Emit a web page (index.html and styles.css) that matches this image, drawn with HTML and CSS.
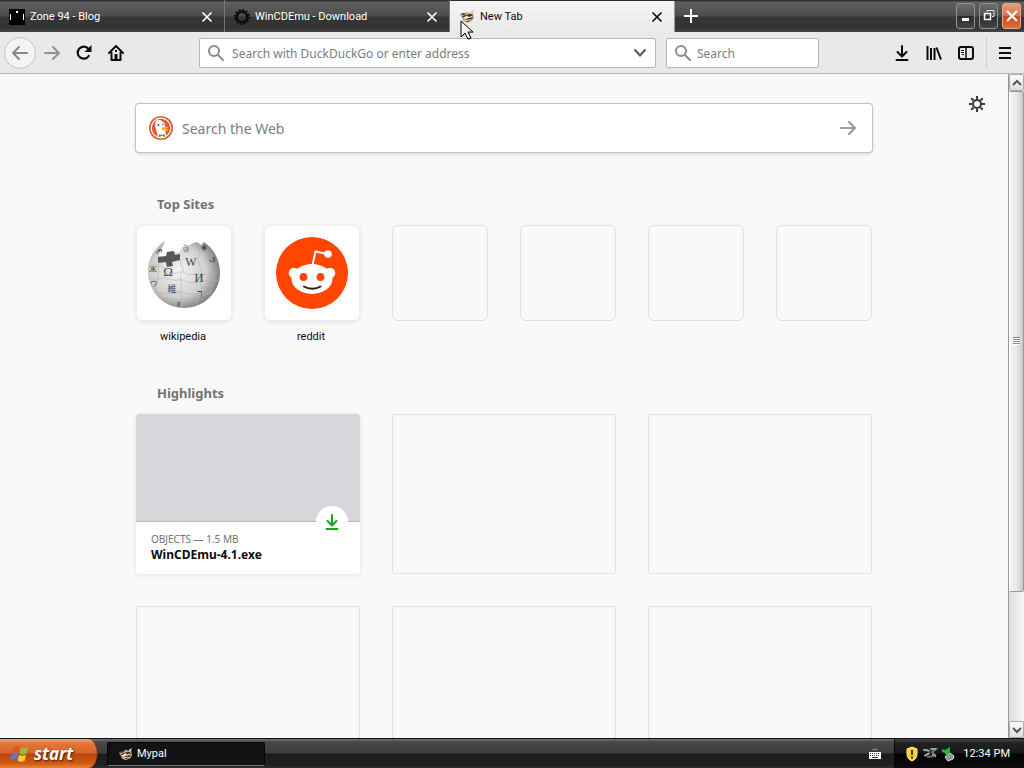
FILE: index.html
```html
<!DOCTYPE html>
<html lang="en">
<head>
<meta charset="utf-8">
<meta name="viewport" content="width=device-width, initial-scale=1">
<title>New Tab</title>
<link rel="stylesheet" href="styles.css">
</head>
<body>
<svg class="defs" width="0" height="0" aria-hidden="true">
  <defs>
    <symbol id="close" viewBox="0 0 12 12"><path d="M2 2l8 8M10 2l-8 8" fill="none" stroke="currentColor" stroke-width="1.700" stroke-linecap="round"/></symbol>
    <symbol id="glass" viewBox="0 0 16 16"><g fill="none" stroke="currentColor" stroke-width="2" stroke-linecap="round"><circle cx="6" cy="6" r="5"/><path d="M10 10l5 5"/></g></symbol>
    <symbol id="download" viewBox="0 0 16 16"><path d="M8 1v10M3.500 7l4.500 4.500L12.500 7M2.500 15h11" fill="none" stroke="currentColor" stroke-width="2" stroke-linecap="round" stroke-linejoin="round"/></symbol>
    <symbol id="arrow" viewBox="0 0 16 16"><path d="M1 8h14M9 2l6 6-6 6" fill="none" stroke="currentColor" stroke-width="2" stroke-linecap="round" stroke-linejoin="round"/></symbol>
    <symbol id="mypal" viewBox="0 0 16 16">
      <path d="M1 6l4-1 3-2 3 1 2-2 2-1-1 3 1 5-2 3-5 2-4-2-1-3z" fill="#c1ad86"/>
      <path d="M1 5l4-1 2 1-3 1zM3 8l3-2 2 1-3 2zM7 6l5-1 2 2-4 1zM6 10l8-2-1 2-5 1zM7 12l4-1-2 2z" fill="#3a2c1d"/>
      <path d="M4 9l3-2 3 1-3 2zM10 8l3-1 0 1-3 1zM7 11l4-1-1 1-3 1zM12 3l2-1-1 3z" fill="#f4edda"/>
    </symbol>
    <radialGradient id="globeShade" cx=".42" cy=".45" r=".6"><stop offset="0" stop-color="#f4f4f4"/><stop offset=".65" stop-color="#cfcfcf"/><stop offset="1" stop-color="#777"/></radialGradient>
  </defs>
</svg>

<header class="tabstrip">
  <div class="tabs">
    <div class="tab">
      <svg class="favicon" viewBox="0 0 16 16"><path fill="#000" d="M0 0h16v16H0z"/><path fill="#fff" d="M1 5h1v6H1zM14 5h1v6h-1zM7 2h2v2H7z"/></svg>
      <span class="tab-title">Zone 94 - Blog</span>
      <button class="tab-close" aria-label="Close Zone 94 - Blog"><svg width="12" height="12"><use href="#close"/></svg></button>
    </div>
    <div class="tab">
      <svg class="favicon" viewBox="0 0 16 16"><circle cx="8" cy="8" r="5.200" fill="none" stroke="#0a0a0a" stroke-width="2.600"/><circle cx="8" cy="8" r="7.200" fill="none" stroke="#0a0a0a" stroke-width="1.600" stroke-dasharray="2.200 1.570"/></svg>
      <span class="tab-title">WinCDEmu - Download</span>
      <button class="tab-close" aria-label="Close WinCDEmu - Download"><svg width="12" height="12"><use href="#close"/></svg></button>
    </div>
    <div class="tab tab-active">
      <svg class="favicon"><use href="#mypal"/></svg>
      <span class="tab-title">New Tab</span>
      <button class="tab-close" aria-label="Close New Tab"><svg width="12" height="12"><use href="#close"/></svg></button>
    </div>
    <button class="tab-add" aria-label="Open a new tab"><svg width="16" height="16" viewBox="0 0 16 16"><path d="M8 1v14M1 8h14" stroke="#fff" stroke-width="2"/></svg></button>
  </div>
  <div class="window-buttons">
    <button class="window-button" aria-label="Minimize"><svg width="16" height="16" viewBox="0 0 16 16"><path fill="#fff" d="M4 10h7v3H4z"/></svg></button>
    <button class="window-button" aria-label="Restore"><svg width="16" height="16" viewBox="0 0 16 16"><path d="M6 4V2.500h7v6h-2" fill="none" stroke="#e4e4e4"/><path d="M3.500 5.500h6v6h-6z" fill="none" stroke="#fff" stroke-width="1.500"/></svg></button>
    <button class="window-button window-close" aria-label="Close"><svg width="16" height="16" viewBox="0 0 16 16"><path d="M3 3l10 10M13 3L3 13" stroke="#fff" stroke-width="2.200"/></svg></button>
  </div>
  <svg class="pointer" width="16" height="22" viewBox="0 0 16 22"><path d="M1 1v16l4-4 3 6 3-1-3-6h5z" transform="translate(1 1)" fill="#000" fill-opacity=".2"/><path d="M1 1v16l4-4 3 6 3-1-3-6h5z" fill="#f4f4f4" stroke="#000" stroke-width="1"/></svg>
</header>

<nav class="toolbar" aria-label="Navigation">
  <button class="tool back" aria-label="Back"><svg class="flip" width="16" height="16"><use href="#arrow"/></svg></button>
  <button class="tool dim" aria-label="Forward"><svg width="16" height="16"><use href="#arrow"/></svg></button>
  <button class="tool" aria-label="Reload"><svg width="16" height="16" viewBox="0 0 16 16"><path d="M12.700 11A6 6 0 1 1 12 3.500l1.500 1.500" fill="none" stroke="currentColor" stroke-width="2.200" stroke-linecap="round"/><path d="M15.500 0v7h-7z" fill="currentColor"/></svg></button>
  <button class="tool" aria-label="Home"><svg width="16" height="16" viewBox="0 0 16 16"><path d="M1 8l7-7 7 7" fill="none" stroke="currentColor" stroke-width="2" stroke-linecap="round" stroke-linejoin="round"/><path d="M3.500 7v8h9V7" fill="none" stroke="currentColor" stroke-width="2" stroke-linejoin="round"/><path d="M6.500 9h3v6h-3zM7 5h2v2H7z" fill="currentColor"/></svg></button>
  <span class="spacer"></span>
  <label class="field address">
    <svg width="16" height="16"><use href="#glass"/></svg>
    <input type="text" aria-label="Address" placeholder="Search with DuckDuckGo or enter address">
    <svg class="chevron" width="14" height="14" viewBox="0 0 14 14"><path d="M2 4l5 5.500L12 4" fill="none" stroke="#555" stroke-width="2" stroke-linecap="round"/></svg>
  </label>
  <label class="field search">
    <svg width="16" height="16"><use href="#glass"/></svg>
    <input type="text" aria-label="Search" placeholder="Search">
  </label>
  <span class="spacer"></span>
  <button class="tool" aria-label="Downloads"><svg width="16" height="16"><use href="#download"/></svg></button>
  <button class="tool" aria-label="Library"><svg width="16" height="16" viewBox="0 0 16 16"><path d="M1.500 1v14M5 3v12M8.500 3v12M10.500 2.500l4.500 12" fill="none" stroke="currentColor" stroke-width="2"/></svg></button>
  <button class="tool" aria-label="Sidebars"><svg width="16" height="16" viewBox="0 0 16 16"><rect x="1" y="2" width="14" height="12" rx="2" fill="none" stroke="currentColor" stroke-width="2"/><path d="M8 2v12" stroke="currentColor" stroke-width="1.500"/><path d="M3 5.500h3M3 7.500h3M4 9.500h2" stroke="currentColor"/></svg></button>
  <span class="divider"></span>
  <button class="tool" aria-label="Open menu"><svg width="14" height="14" viewBox="0 0 14 14"><path d="M1 2h12M1 7h12M1 12h12" stroke="currentColor" stroke-width="2"/></svg></button>
</nav>

<div class="viewport">
  <main class="page">
    <button class="settings" aria-label="Page settings"><svg width="16" height="16" viewBox="0 0 16 16"><circle cx="8" cy="8" r="4" fill="none" stroke="currentColor" stroke-width="2"/><path d="M8 0v3M8 13v3M0 8h3M13 8h3M2.300 2.300l2.200 2.200M11.500 11.500l2.200 2.200M13.700 2.300l-2.200 2.200M4.500 11.500l-2.200 2.200" stroke="currentColor" stroke-width="2"/></svg></button>
    <div class="content">
      <form class="web-search" onsubmit="return false">
        <svg width="24" height="24" viewBox="0 0 24 24"><circle cx="12" cy="12" r="12" fill="#de5833"/><circle cx="12" cy="12" r="9.800" fill="none" stroke="#fff" stroke-width="1.200"/><path d="M7 5c2-2 7-1 8.500 2.500 1.300 3 .5 7 1.500 13-3 1.400-6 1-8 0C8 16 6 12 6 8z" fill="#fff"/><path d="M12.500 12c2-1.500 4-1 7-1.500.6 1.500-2 2-3.500 2.500 1.500.6 3 0 3.500 1-1 1.600-5 1-7-.5z" fill="#fdb913"/><circle cx="9.500" cy="9" r="1" fill="#2d4f8e"/><circle cx="14" cy="8.500" r=".8" fill="#2d4f8e"/><path d="M10 18l3 1 3-1v3l-3-1-3 1z" fill="#55a63a"/></svg>
        <input type="text" aria-label="Search the Web" placeholder="Search the Web">
        <button aria-label="Submit search"><svg width="16" height="16"><use href="#arrow"/></svg></button>
      </form>

      <section class="section">
        <h2>Top Sites</h2>
        <div class="sites">
          <a class="site" href="#wikipedia">
            <span class="tile tile-filled">
              <svg width="76" height="76" viewBox="0 0 76 76">
                <path d="M19 6C7 14 1 26 2 38c1 20 17 35 36 35s36-15 36-35c0-14-7-25-16-31l-3 3-4-3-4 1-5 3-5 1-4 5-7 1-4 5-9-2z" fill="url(#globeShade)"/>
                <path d="M12 22l8-1 1-4 7-1 1 4 5-1 0 6-8 2 1 4-6 1-1-5-8 1z" fill="#575757"/>
                <g fill="none" stroke="#b4b4b4" stroke-width=".6">
                  <path d="M4 29c8 2 12 1 17 7s14-2 18 2 11-1 17 1 12-3 16 0M3 43c10 3 13-2 20 1s12-1 17 2 12 1 18 0 9-1 14 0M8 58c9-2 14 3 21 0s11 2 17 1 13 2 20-2M13 27c-2 10 1 12-2 19s2 12 1 14 3 4 6 7M35 24c-3 6 5 9 1 13s1 12-1 17 3 10 1 18M53 11c2 9-3 11 1 20s-2 14 1 20-3 10-5 18M65 17c2 10-2 15 2 22s-2 14-3 20"/>
                </g>
                <g fill="#444" font-family="Liberation Serif, serif" text-anchor="middle">
                  <text x="22" y="41" font-size="13">Ω</text><text x="45" y="31" font-size="12">W</text><text x="53" y="47" font-size="13">И</text><text x="26" y="57" font-size="9" font-family="Noto Sans CJK JP, sans-serif">維</text><text x="54" y="62" font-size="11">ר</text><text x="66" y="26" font-size="9">ى</text><text x="7" y="37" font-size="8">Ж</text><text x="8" y="51" font-size="8">ウ</text><text x="40" y="17" font-size="8">উ</text><text x="58" y="15" font-size="8">◈</text><text x="32" y="71" font-size="6">ह</text><text x="13" y="19" font-size="8">ጦ</text>
                </g>
              </svg>
            </span>
            <span class="site-name">wikipedia</span>
          </a>
          <a class="site" href="#reddit">
            <span class="tile tile-filled">
              <svg width="72" height="72" viewBox="0 0 72 72"><circle cx="36" cy="36" r="36" fill="#ff4500"/><path d="M36.500 28l3-13.500 12 2.500" fill="none" stroke="#fff" stroke-width="2" stroke-linejoin="round"/><circle cx="52" cy="17" r="3.800" fill="#fff"/><circle cx="18" cy="36" r="5.300" fill="#fff"/><circle cx="54" cy="36" r="5.300" fill="#fff"/><ellipse cx="36" cy="42" rx="20.500" ry="15" fill="#fff"/><circle cx="27.500" cy="40" r="3.900" fill="#ff4500"/><circle cx="44.500" cy="40" r="3.900" fill="#ff4500"/><path d="M28 49.500c4.500 3 12 3 16.500 0" fill="none" stroke="#222" stroke-width="2" stroke-linecap="round"/></svg>
            </span>
            <span class="site-name">reddit</span>
          </a>
          <span class="tile"></span><span class="tile"></span><span class="tile"></span><span class="tile"></span>
        </div>
      </section>

      <section class="section">
        <h2>Highlights</h2>
        <div class="cards">
          <a class="card card-filled" href="#download-item">
            <span class="card-image"><span class="card-badge"><svg width="16" height="16"><use href="#download"/></svg></span></span>
            <span class="card-text"><span class="card-meta">OBJECTS — 1.5 MB</span><strong>WinCDEmu-4.1.exe</strong></span>
          </a>
          <span class="card"></span><span class="card"></span>
          <span class="card"></span><span class="card"></span><span class="card"></span>
        </div>
      </section>
    </div>
  </main>
  <div class="scrollbar">
    <button class="scroll-button" aria-label="Scroll up"><svg width="10" height="8" viewBox="0 0 10 8"><path d="M1 6l4-4 4 4" fill="none" stroke="#555" stroke-width="2"/></svg></button>
    <div class="scroll-track"><div class="scroll-thumb"><span class="grip"></span></div></div>
    <button class="scroll-button" aria-label="Scroll down"><svg width="10" height="8" viewBox="0 0 10 8"><path d="M1 2l4 4 4-4" fill="none" stroke="#555" stroke-width="2"/></svg></button>
  </div>
</div>

<footer class="taskbar">
  <button class="start">
    <svg width="20" height="18" viewBox="0 0 20 18"><path d="M4 2c2-1.500 4-1.500 6 0L8.500 8c-2-1.300-4-1.200-6 0z" fill="#e8502a"/><path d="M11 2.500c2 1.400 4.500 1.300 7 0l-1.500 6c-2.500 1.300-5 1.200-7 0z" fill="#8ac43c"/><path d="M2 9.200c2-1.300 4-1.300 6.200 0L6.600 15c-2-1.300-4-1.200-6.200 0z" fill="#4a7fe8"/><path d="M9.200 9.700c2 1.300 4.500 1.300 7 0l-1.600 6c-2.500 1.300-5 1.200-7 0z" fill="#f8cf2c"/></svg>
    <span>start</span>
  </button>
  <button class="task"><svg width="15" height="15"><use href="#mypal"/></svg><span>Mypal</span></button>
  <svg class="keyboard" width="14" height="13" viewBox="0 0 14 13"><path d="M1 5h12v7H1z" fill="#fff"/><path d="M2 6.500h10M2 8.500h10" stroke="#333" stroke-dasharray="1 1"/><path d="M4 10.500h6" stroke="#333"/><path d="M4 2l2 1 2-1 2 1" fill="none" stroke="#999"/></svg>
  <div class="tray">
    <svg width="14" height="16" viewBox="0 0 14 16"><path d="M7 1l5 2v5c0 4-2 5.500-5 7-3-1.500-5-3-5-7V3z" fill="#f7cf27" stroke="#fff2a0"/><path d="M6 4h2v5H6zM6 10.500h2v2H6z" fill="#40330a"/></svg>
    <svg width="16" height="16" viewBox="0 0 16 16"><path d="M1 4l7 1M8 3l6 0-4 3 4 4M2 10l6-3M5 11l7-1" fill="none" stroke="#66756d" stroke-width="2"/><path d="M2 3.500l5 1M9 3h5M3 9.500l4-2M10 8l4 3" stroke="#ccd7cf"/></svg>
    <svg width="14" height="16" viewBox="0 0 14 16"><path d="M4 11l5-4 4 3-1 3-5 2z" fill="#8b9790" stroke="#d3dbd6"/><path d="M1 3l3 1 5-3v6L7 8l-2 2-1-3-3-1z" fill="#28b13c"/></svg>
    <time>12:34 PM</time>
  </div>
</footer>
</body>
</html>
```
FILE: styles.css
```css
* { box-sizing: border-box; }

body {
  margin: 0;
  height: 100vh;
  display: flex;
  flex-direction: column;
  overflow: hidden;
  font: 11px/16px Roboto, "Noto Sans", sans-serif;
  color: #0c0c0d;
  background: #f9f9fa;
}

button {
  padding: 0;
  border: 0;
  background: none;
  font: inherit;
  color: inherit;
  display: flex;
  align-items: center;
  justify-content: center;
}

input {
  flex: 1;
  min-width: 0;
  padding: 2px 0 0;
  border: 0;
  outline: 0;
  background: none;
  font: inherit;
  color: inherit;
}

input::placeholder { color: #7c7c7c; opacity: 1; }
a { color: inherit; text-decoration: none; }
svg { flex: none; display: block; }
.defs { position: absolute; }

/* Tabs */
.tabstrip {
  position: relative;
  flex: none;
  display: flex;
  height: 32px;
  background: linear-gradient(#1c1c1c 0, #606060 2px, #4c4c4c 16px, #353535 17px, #343434 28px, #454545);
}

.tabs { flex: 1; display: flex; min-width: 0; }

.tab {
  flex: 0 1 225px;
  min-width: 0;
  display: flex;
  align-items: center;
  gap: 5px;
  padding: 2px 11px 0 9px;
  border-right: 1px solid #777;
  color: #fff;
}

.tab-active {
  margin-top: 1px;
  padding-top: 0;
  border-color: #999;
  background: linear-gradient(#f5f5f5, #e9e9e9);
  color: #0c0c0d;
}

.favicon { width: 16px; height: 16px; }
.tab-title { flex: 1; overflow: hidden; white-space: nowrap; }
.tab-add { width: 32px; }

.window-buttons { display: flex; gap: 4px; padding: 3px 3px 3px 0; }

.window-button {
  width: 19px;
  border: 1px solid #929292;
  border-radius: 3px;
  background: linear-gradient(#6c6c6c, #505050 50%, #2c2c2c 51%, #444);
}

.window-close {
  border-color: #f0a888;
  background: linear-gradient(#e9997b, #d97650 48%, #c84a1e 50%, #df6d38);
}

.pointer { position: absolute; top: 20px; left: 460px; z-index: 2; }

/* Navigation bar */
.toolbar {
  flex: none;
  display: flex;
  align-items: center;
  height: 42px;
  padding: 0 3px 0 4px;
  border-bottom: 1px solid #b9b9b9;
  background: #e9e9e9;
}

.tool { flex: none; width: 32px; height: 32px; }
.back { border: 1px solid #c4c4c4; border-radius: 50%; background: #f4f4f4; color: #868686; }
.dim { color: #929292; }
.flip { transform: scaleX(-1); }
.spacer { flex: 67; }
.divider { width: 1px; height: 32px; margin: 0 2px 0 4px; background: #d2d2d2; }

.field {
  display: flex;
  align-items: center;
  gap: 8px;
  min-width: 0;
  height: 30px;
  padding: 0 8px;
  border: 1px solid #b5b5b5;
  border-radius: 2px;
  background: #fff;
  color: #8b8b8b;
  font-family: "Noto Sans", "Open Sans", sans-serif;
  font-size: 12px;
}

.address { flex: 438; margin-right: 10px; }
.search { flex: 0 1 153px; gap: 6px; }

/* Page */
.viewport { flex: 1; min-height: 0; display: flex; }
.page { position: relative; flex: 1; min-width: 0; overflow: hidden; }
.settings { position: absolute; top: 14px; right: 15px; width: 32px; height: 32px; color: #38383d; }

.content { width: 100%; max-width: 736px; margin: 0 auto; padding-top: 30px; }

.web-search {
  display: flex;
  align-items: center;
  gap: 9px;
  height: 48px;
  padding: 0 16px 0 13px;
  border-radius: 3px;
  background: #fff;
  box-shadow: 0 0 0 1px #c2c2c3, 0 2px 4px #0002;
  font-family: "Noto Sans", "Open Sans", sans-serif;
  font-size: 14px;
}

.web-search button { color: #999; }

.section { margin-top: 40px; }
.section + .section { margin-top: 36px; }
.section h2 { margin: 0 0 11px; padding: 2px 21px 0; font: bold 13px/20px "Noto Sans", "Open Sans", sans-serif; color: #737373; }

.sites { display: grid; grid-template-columns: repeat(6, 1fr); gap: 32px; }

.tile {
  display: flex;
  align-items: center;
  justify-content: center;
  height: 96px;
  border: 1px solid #e1e1e2;
  border-radius: 6px;
}

.tile-filled { background: #fff; border-color: #ededee; box-shadow: 0 1px 4px #0c0c0d1a; }
.site-name { display: block; margin-top: 8px; padding-right: 2px; text-align: center; }

.cards { display: grid; grid-template-columns: repeat(3, 1fr); gap: 32px; }

.card { display: flex; flex-direction: column; height: 160px; border: 1px solid #e1e1e2; border-radius: 3px; }
.card-filled { border: 0; background: #fff; box-shadow: 0 1px 4px #0c0c0d1a; }

.card-image {
  position: relative;
  height: 108px;
  border-bottom: 1px solid #bcbcbe;
  border-radius: 3px 3px 0 0;
  background: #d7d7db;
}

.card-badge {
  position: absolute;
  right: 12px;
  bottom: -17px;
  width: 32px;
  height: 32px;
  display: flex;
  align-items: center;
  justify-content: center;
  border-radius: 50%;
  background: #fff;
  color: #12a912;
}

.card-text {
  display: flex;
  flex-direction: column;
  padding: 10px 15px;
  font: 12px/15px "Noto Sans", "Open Sans", sans-serif;
}

.card-meta { font-size: 10px; color: #737373; }

/* Scrollbar */
.scrollbar { flex: none; width: 16px; display: flex; flex-direction: column; border-left: 1px solid #999; background: #eee; }
.scroll-button { flex: none; height: 17px; border: 1px solid #aaa; border-radius: 2px; background: linear-gradient(#fff, #ddd); }
.scroll-track { flex: 1; background: linear-gradient(90deg, #ddd, #f7f7f7); }

.scroll-thumb {
  height: 79.5%;
  display: flex;
  align-items: center;
  justify-content: center;
  border: 1px solid #999;
  border-left-color: #fff;
  border-radius: 2px;
  background: linear-gradient(90deg, #f4f4f4, #e8e8e8 50%, #c8c8c8);
}

.grip { width: 7px; height: 8px; background: repeating-linear-gradient(#888 0 1px, #fff 1px 2px); }

/* Taskbar */
.taskbar {
  flex: none;
  display: flex;
  align-items: stretch;
  height: 30px;
  border-top: 1px solid #111;
  background: linear-gradient(#747474, #484848 3px, #3c3c3c 14px, #1c1c1c 15px, #202020 26px, #303030);
  color: #fff;
}

.start {
  width: 98px;
  gap: 4px;
  padding-right: 14px;
  border-right: 1px solid #6c2e0c;
  border-radius: 0 10px 10px 0 / 0 15px 15px 0;
  background: linear-gradient(#f7a875, #e47738 4px, #d6642a 14px, #bb4309 15px, #cc5915 24px, #e98330);
  font: italic bold 17px/20px "Open Sans", sans-serif;
  text-shadow: 1px 1px 2px #4a1c05;
}

.task {
  width: 158px;
  justify-content: flex-start;
  gap: 4px;
  margin: 3px 0 2px 9px;
  padding-left: 10px;
  border: 1px solid #050505;
  border-bottom-color: #777;
  border-radius: 2px;
  background: #131313;
}

.keyboard { align-self: center; margin: 0 12px 0 auto; }

.tray {
  display: flex;
  align-items: center;
  gap: 3px;
  padding: 0 14px 0 10px;
  border-left: 1px solid #050505;
  background: linear-gradient(#484848, #222 4px, #181818 14px, #030303 15px, #0c0c0c);
}

.tray time { margin-left: 5px; white-space: nowrap; }
```
